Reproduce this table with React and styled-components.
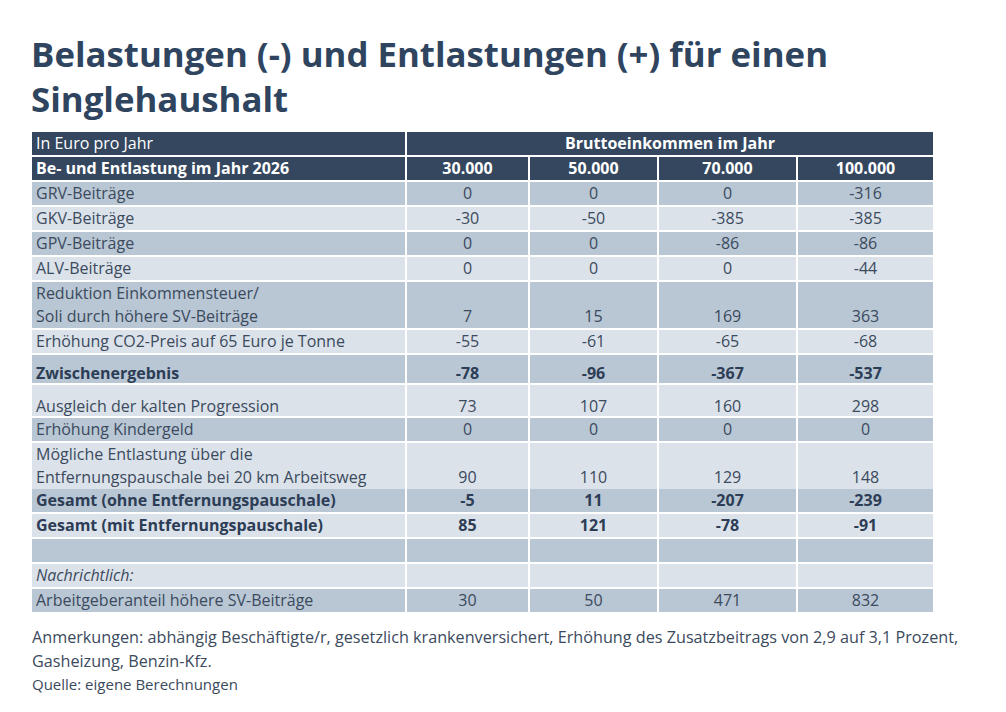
import React from "react";
import styled, { createGlobalStyle, css } from "styled-components";

const GlobalStyle = createGlobalStyle`
  html, body { margin: 0; padding: 0; background: #ffffff; }
  body { font-family: "Open Sans", "Noto Sans", sans-serif; }
`;

const COLS = "373px 121px 127px 137px 135px";

const Page = styled.div`
  width: 1006px;
  height: 712px;
  box-sizing: border-box;
  padding: 31px 32px 0 32px;
  background: #ffffff;
`;

const Title = styled.h1`
  margin: 0 0 11px -1px;
  font-size: 34.8px;
  line-height: 45px;
  font-weight: 700;
  color: #2f445e;
  max-width: 860px;
`;

const Table = styled.div`
  display: flex;
  flex-direction: column;
  gap: 2px;
  width: 901px;
`;

const Row = styled.div`
  display: grid;
  grid-template-columns: ${COLS};
  column-gap: 2px;
  height: ${(p) => p.$h || 23}px;
`;

const tones = {
  head: css`background: #34475f; color: #ffffff;`,
  dark: css`background: #b9c6d4; color: #3b4a5d;`,
  light: css`background: #dbe2ea; color: #3b4a5d;`,
};

const Cell = styled.div`
  ${(p) => tones[p.$tone]}
  display: flex;
  align-items: flex-end;
  justify-content: ${(p) => (p.$center ? "center" : "flex-start")};
  padding: 0 4px;
  font-size: 16px;
  line-height: ${(p) => (p.$tight ? "19px" : "23px")};
  font-weight: ${(p) => (p.$bold ? 700 : 400)};
  font-style: ${(p) => (p.$italic ? "italic" : "normal")};
  ${(p) => p.$bold && p.$tone !== "head" && css`color: #2c3d55;`}
  white-space: pre-line;
  grid-column: ${(p) => p.$span || "auto"};
`;

const Notes = styled.div`
  margin-top: 14px;
  max-width: 950px;
  font-size: 16.2px;
  line-height: 23.5px;
  color: #3b4a5d;
`;

const Note = styled.p`
  margin: 0;
  font-size: ${(p) => (p.$small ? "15px" : "inherit")};
`;

const rows = [
  { label: "GRV-Beiträge", v: ["0", "0", "0", "-316"] },
  { label: "GKV-Beiträge", v: ["-30", "-50", "-385", "-385"] },
  { label: "GPV-Beiträge", v: ["0", "0", "-86", "-86"] },
  { label: "ALV-Beiträge", v: ["0", "0", "0", "-44"] },
  { label: "Reduktion Einkommensteuer/\nSoli durch höhere SV-Beiträge", v: ["7", "15", "169", "363"], h: 46 },
  { label: "Erhöhung CO2-Preis auf 65 Euro je Tonne", v: ["-55", "-61", "-65", "-68"] },
  { label: "Zwischenergebnis", v: ["-78", "-96", "-367", "-537"], bold: true, h: 28, tight: true },
  { label: "Ausgleich der kalten Progression", v: ["73", "107", "160", "298"], h: 31, tight: true },
  { label: "Erhöhung Kindergeld", v: ["0", "0", "0", "0"] },
  { label: "Mögliche Entlastung über die\nEntfernungspauschale bei 20 km Arbeitsweg", v: ["90", "110", "129", "148"], h: 44 },
  { label: "Gesamt (ohne Entfernungspauschale)", v: ["-5", "11", "-207", "-239"], bold: true },
  { label: "Gesamt (mit Entfernungspauschale)", v: ["85", "121", "-78", "-91"], bold: true },
  { label: "", v: ["", "", "", ""] },
  { label: "Nachrichtlich:", v: ["", "", "", ""], italic: true },
  { label: "Arbeitgeberanteil höhere SV-Beiträge", v: ["30", "50", "471", "832"] },
];

const incomes = ["30.000", "50.000", "70.000", "100.000"];

export default function App() {
  return (
    <Page>
      <GlobalStyle />
      <Title>Belastungen (-) und Entlastungen (+) für einen Singlehaushalt</Title>
      <Table>
        <Row>
          <Cell $tone="head">In Euro pro Jahr</Cell>
          <Cell $tone="head" $bold $center $span="2 / -1">Bruttoeinkommen im Jahr</Cell>
        </Row>
        <Row>
          <Cell $tone="head" $bold>Be- und Entlastung im Jahr 2026</Cell>
          {incomes.map((i) => (
            <Cell key={i} $tone="head" $bold $center>{i}</Cell>
          ))}
        </Row>
        {rows.map((r, idx) => {
          const tone = idx % 2 === 0 ? "dark" : "light";
          return (
            <Row key={idx} $h={r.h}>
              <Cell $tone={tone} $bold={r.bold} $italic={r.italic} $tight={r.tight}>{r.label}</Cell>
              {r.v.map((val, j) => (
                <Cell key={j} $tone={tone} $bold={r.bold} $center $tight={r.tight}>{val}</Cell>
              ))}
            </Row>
          );
        })}
      </Table>
      <Notes>
        <Note>
          Anmerkungen: abhängig Beschäftigte/r, gesetzlich krankenversichert, Erhöhung des Zusatzbeitrags von 2,9 auf 3,1 Prozent, Gasheizung, Benzin-Kfz.
        </Note>
        <Note $small>Quelle: eigene Berechnungen</Note>
      </Notes>
    </Page>
  );
}
